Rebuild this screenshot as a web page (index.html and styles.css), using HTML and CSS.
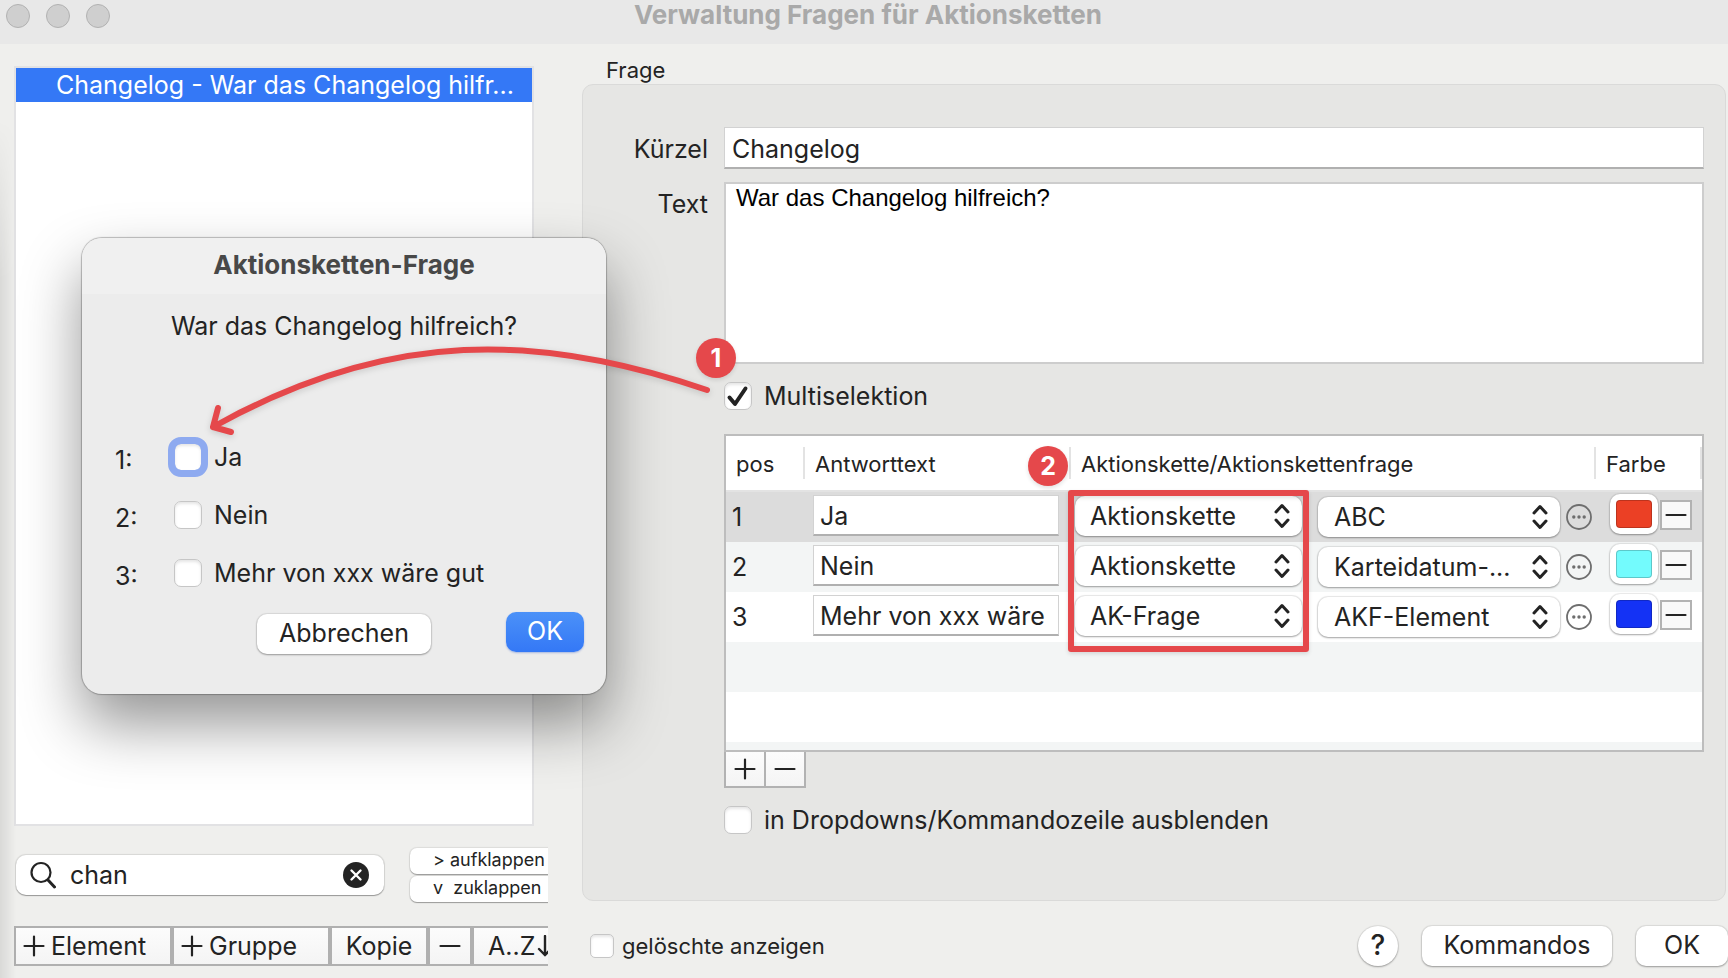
FILE: index.html
```html
<!DOCTYPE html>
<html lang="de">
<head>
<meta charset="utf-8">
<title>Verwaltung Fragen für Aktionsketten</title>
<link rel="stylesheet" href="styles.css">
</head>
<body>
<svg class="defs" width="0" height="0" aria-hidden="true">
  <symbol id="chevrons" viewBox="0 0 16 26"><path d="M2 9l6-6.500 6 6.500M2 17l6 6.500 6-6.500" fill="none" stroke="#232323" stroke-width="3" stroke-linecap="round" stroke-linejoin="round"/></symbol>
  <symbol id="minus" viewBox="0 0 22 22"><path d="M1.500 11h19" stroke="#232323" stroke-width="2.200" stroke-linecap="round"/></symbol>
  <symbol id="plus" viewBox="0 0 22 22"><path d="M1.500 11h19M11 1.500v19" stroke="#232323" stroke-width="2.200" stroke-linecap="round"/></symbol>
  <symbol id="dots" viewBox="0 0 26 26"><circle cx="13" cy="13" r="12" fill="none" stroke="#6e6e6e" stroke-width="1.800"/><circle cx="7.800" cy="13" r="1.700" fill="#6e6e6e"/><circle cx="13" cy="13" r="1.700" fill="#6e6e6e"/><circle cx="18.200" cy="13" r="1.700" fill="#6e6e6e"/></symbol>
</svg>
<div class="window">
  <header class="titlebar">
    <div class="lights"><i></i><i></i><i></i></div>
    <h1>Verwaltung Fragen für Aktionsketten</h1>
  </header>
  <div class="content">
    <aside class="sidebar">
      <ul class="list"><li>Changelog - War das Changelog hilfr...</li></ul>
      <div class="filter">
        <div class="search">
          <svg width="26" height="28" viewBox="0 0 26 28" fill="none" stroke="#232323" stroke-width="2.200" stroke-linecap="round"><circle cx="11" cy="11.500" r="9.500"/><path d="M18 19l6.500 7" stroke-width="3"/></svg>
          <input type="text" value="chan" aria-label="Suche">
          <button class="clear" aria-label="Suche löschen"><svg width="26" height="26" viewBox="0 0 26 26"><circle cx="13" cy="13" r="13" fill="#232323"/><path d="M8.500 8.500l9 9M17.500 8.500l-9 9" stroke="#fff" stroke-width="2.400" stroke-linecap="round"/></svg></button>
        </div>
        <div class="fold">
          <button>&gt; aufklappen</button>
          <button>v&nbsp; zuklappen</button>
        </div>
      </div>
      <div class="tools">
        <button class="t-element"><svg width="22" height="22"><use href="#plus"/></svg>Element</button>
        <button class="t-gruppe"><svg width="22" height="22"><use href="#plus"/></svg>Gruppe</button>
        <button class="t-kopie">Kopie</button>
        <button class="t-minus" aria-label="Entfernen"><svg width="22" height="22"><use href="#minus"/></svg></button>
        <button class="t-sort">A..Z<svg width="16" height="22" viewBox="0 0 16 22" fill="none" stroke="#232323" stroke-width="2.400" stroke-linecap="round"><path d="M8 1v19M2 14l6 6 6-6"/></svg></button>
      </div>
    </aside>
    <main class="detail">
      <h2>Frage</h2>
      <section class="group">
        <label class="caption" for="kuerzel">Kürzel</label>
        <input class="field" id="kuerzel" type="text" value="Changelog">
        <label class="caption" for="text">Text</label>
        <textarea id="text">War das Changelog hilfreich?</textarea>
        <label class="check multi"><input type="checkbox" checked><span>Multiselektion</span></label>
        <div class="answers">
          <table>
            <thead><tr><th class="c-pos"><span>pos</span></th><th class="c-text"><span>Antworttext</span></th><th><span>Aktionskette/Aktionskettenfrage</span></th><th class="c-color"><span>Farbe</span></th></tr></thead>
            <tbody>
              <tr class="selected">
                <td>1</td>
                <td><input class="field" type="text" value="Ja" aria-label="Antworttext 1"></td>
                <td><div class="chain"><span class="select kind"><select aria-label="Art 1"><option>Aktionskette</option></select><svg width="16" height="26"><use href="#chevrons"/></svg></span><span class="select target"><select aria-label="Ziel 1"><option>ABC</option></select><svg width="16" height="26"><use href="#chevrons"/></svg></span><button class="more" aria-label="Mehr"><svg width="26" height="26"><use href="#dots"/></svg></button></div></td>
                <td><div class="color"><button class="swatch" aria-label="Rot"><i class="red"></i></button><button class="square" aria-label="Entfernen"><svg width="22" height="22"><use href="#minus"/></svg></button></div></td>
              </tr>
              <tr>
                <td>2</td>
                <td><input class="field" type="text" value="Nein" aria-label="Antworttext 2"></td>
                <td><div class="chain"><span class="select kind"><select aria-label="Art 2"><option>Aktionskette</option></select><svg width="16" height="26"><use href="#chevrons"/></svg></span><span class="select target"><select aria-label="Ziel 2"><option>Karteidatum-...</option></select><svg width="16" height="26"><use href="#chevrons"/></svg></span><button class="more" aria-label="Mehr"><svg width="26" height="26"><use href="#dots"/></svg></button></div></td>
                <td><div class="color"><button class="swatch" aria-label="Cyan"><i class="cyan"></i></button><button class="square" aria-label="Entfernen"><svg width="22" height="22"><use href="#minus"/></svg></button></div></td>
              </tr>
              <tr>
                <td>3</td>
                <td><input class="field" type="text" value="Mehr von xxx wäre" aria-label="Antworttext 3"></td>
                <td><div class="chain"><span class="select kind"><select aria-label="Art 3"><option>AK-Frage</option></select><svg width="16" height="26"><use href="#chevrons"/></svg></span><span class="select target"><select aria-label="Ziel 3"><option>AKF-Element</option></select><svg width="16" height="26"><use href="#chevrons"/></svg></span><button class="more" aria-label="Mehr"><svg width="26" height="26"><use href="#dots"/></svg></button></div></td>
                <td><div class="color"><button class="swatch" aria-label="Blau"><i class="blue"></i></button><button class="square" aria-label="Entfernen"><svg width="22" height="22"><use href="#minus"/></svg></button></div></td>
              </tr>
            </tbody>
          </table>
        </div>
        <div class="rowtools">
          <button aria-label="Hinzufügen"><svg width="22" height="22"><use href="#plus"/></svg></button>
          <button aria-label="Entfernen"><svg width="22" height="22"><use href="#minus"/></svg></button>
        </div>
        <label class="check hide"><input type="checkbox"><span>in Dropdowns/Kommandozeile ausblenden</span></label>
      </section>
      <footer>
        <label class="check small"><input type="checkbox"><span>gelöschte anzeigen</span></label>
        <button class="push help">?</button>
        <button class="push commands">Kommandos</button>
        <button class="push ok">OK</button>
      </footer>
    </main>
  </div>
</div>

<div class="dialog" role="dialog" aria-labelledby="dlg-title">
  <h2 id="dlg-title">Aktionsketten-Frage</h2>
  <p>War das Changelog hilfreich?</p>
  <div class="options">
    <div class="option"><b>1:</b><label class="check focused"><input type="checkbox"><span>Ja</span></label></div>
    <div class="option"><b>2:</b><label class="check"><input type="checkbox"><span>Nein</span></label></div>
    <div class="option"><b>3:</b><label class="check"><input type="checkbox"><span>Mehr von xxx wäre gut</span></label></div>
  </div>
  <div class="actions">
    <button class="push cancel">Abbrechen</button>
    <button class="push primary">OK</button>
  </div>
</div>

<svg class="arrow" width="520" height="110" viewBox="200 340 520 110" fill="none" stroke="#e5484b" stroke-width="6" stroke-linecap="round" stroke-linejoin="round" aria-hidden="true">
  <path d="M707 390C540 333 390 328 213 427M218 408l-5 19 18 5"/>
</svg>
<div class="frame"></div>
<div class="badge one">1</div>
<div class="badge two">2</div>
</body>
</html>
```
FILE: styles.css
```css
* { box-sizing: border-box; }
body {
  margin: 0;
  overflow: hidden;
  background: #efefed;
  color: #232323;
  font-family: Inter, "Liberation Sans", sans-serif;
  font-size: 25px;
  line-height: 30px;
}
h1, h2, p, ul { margin: 0; padding: 0; }
button, input, select, textarea { font: inherit; color: inherit; margin: 0; border-radius: 0; outline: none; }
button { padding: 0; border: 0; background: none; white-space: nowrap; }
svg { display: block; flex: none; }
.defs { position: absolute; }

.window { display: flex; flex-direction: column; min-height: 100vh; position: relative; }
.window::before {
  content: "";
  position: absolute;
  inset: 120px auto 0 0;
  width: 16px;
  background: linear-gradient(90deg, rgba(0,0,0,.09), transparent);
  mask-image: linear-gradient(transparent, #000 160px);
}
.titlebar { height: 44px; background: #e8e8e8; display: grid; grid-template-columns: 120px 1fr 118px; padding-left: 6px; }
.lights { display: flex; gap: 16px; padding-top: 4px; }
.lights i { width: 24px; height: 24px; border-radius: 50%; background: #cfcfcf; border: 1px solid #b2b2b2; }
.titlebar h1 { font-size: 26px; line-height: 30px; font-weight: 700; color: #a9a9a9; text-align: center; }
.content { flex: 1; display: grid; grid-template-columns: 548px 1fr; column-gap: 34px; }

.sidebar { display: flex; flex-direction: column; padding: 22px 0 12px 14px; overflow: hidden; }
.list { flex: 1; list-style: none; background: #fff; border: 2px solid #e2e2e4; margin-right: 14px; }
.list li { height: 34px; line-height: 34px; padding-left: 40px; background: #3478f6; color: #fff; white-space: nowrap; overflow: hidden; }
.filter { display: flex; align-items: center; gap: 26px; padding-left: 2px; margin: 22px 0 24px; }
.search { width: 368px; height: 40px; display: flex; align-items: center; padding: 0 15px 0 14px; background: #fff; border-radius: 10px; box-shadow: 0 0 1px 1px rgba(0,0,0,.1), 0 1px 1px rgba(0,0,0,.3); }
.search input { flex: 1; min-width: 0; border: 0; padding: 0 0 0 14px; background: none; }
.fold { flex: 1; display: grid; gap: 2px; margin-right: -20px; }
.fold button { height: 26px; padding: 0 0 2px 23px; text-align: left; font-size: 18px; line-height: 24px; background: #fff; border-radius: 7px; box-shadow: 0 0 1px 1px rgba(0,0,0,.08), 0 1px 1px rgba(0,0,0,.3); }
.tools { display: flex; height: 40px; margin-right: -20px; }
.tools button { display: flex; align-items: center; border: 2px solid #b0b0b0; background: linear-gradient(#fcfcfc, #f4f4f4); }
.t-element, .t-gruppe { width: 158px; padding-left: 7px; gap: 6px; }
.t-kopie { width: 98px; justify-content: center; }
.t-minus { width: 44px; justify-content: center; }
.t-sort { width: 96px; padding-left: 14px; gap: 2px; }

.detail { display: flex; flex-direction: column; padding: 10px 2px 12px 0; }
.detail > h2 { font-size: 22px; line-height: 32px; height: 30px; font-weight: 400; padding-left: 24px; }
.group {
  flex: 1;
  display: grid;
  grid-template-columns: 125px 1fr;
  grid-template-rows: 55px 200px 52px 318px 54px 28px;
  column-gap: 16px;
  align-content: start;
  padding: 42px 21px 0 0;
  background: #e6e6e4;
  border: 1px solid #dadad9;
  border-radius: 11px;
}
.caption { text-align: right; line-height: 45px; }
.field { width: 100%; height: 42px; background: #fff; border: 1px solid #d2d2d2; border-bottom: 2px solid #b0b0b0; padding: 2px 7px 0; }
textarea { width: 100%; height: 182px; display: block; resize: none; border: 2px solid #cdcdcd; background: #fff; padding: 0 10px; font-family: "Liberation Sans", Arial, sans-serif; font-size: 24px; line-height: 28px; color: #000; }
.check { display: flex; align-items: center; height: 28px; gap: 12px; white-space: nowrap; }
.check input { appearance: none; flex: none; width: 28px; height: 28px; border: 1px solid #c6c6c6; border-radius: 7px; background: #fff; box-shadow: inset 0 2px 3px rgba(0,0,0,.1); }
.check input:checked { background: url("data:image/svg+xml,%3Csvg xmlns='http://www.w3.org/2000/svg' viewBox='0 0 28 28'%3E%3Cpath d='M5.500 15.500l5.500 6.500L21.500 6.500' fill='none' stroke='%23232323' stroke-width='4' stroke-linecap='round' stroke-linejoin='round'/%3E%3C/svg%3E") center / 28px 28px no-repeat #fff; }
.multi, .answers, .rowtools, .hide { grid-column: 2; }

.answers { border: 2px solid #bdbdbd; overflow: hidden; background: linear-gradient(#fff 206px, #f3f5f5 206px 256px, #fff 256px 306px, #f3f5f5 306px); }
table { width: 100%; table-layout: fixed; border-collapse: separate; border-spacing: 0; }
th { height: 56px; padding: 0; border-bottom: 2px solid #e3e3e3; font-size: 22px; font-weight: 400; text-align: left; background: #fff; }
th span { display: block; height: 32px; line-height: 34px; padding-left: 10px; border-right: 2px solid #e3e3e3; white-space: nowrap; }
.c-pos { width: 79px; }
.c-text { width: 266px; }
.c-color { width: 106px; }
td { height: 50px; padding: 0; vertical-align: top; }
td:first-child { padding-left: 6px; line-height: 50px; }
tr.selected td { background: #dcdcdc; }
tbody tr:nth-child(2) td { background: #f3f5f5; }
td .field { display: block; width: 246px; height: 41px; margin: 3px 0 0 8px; padding: 2px 6px 0; }
.chain { display: flex; align-items: center; height: 50px; padding: 0 4px; }
.select { position: relative; display: block; }
.select select { appearance: none; display: block; width: 100%; height: 40px; padding: 0 40px 0 16px; border: 0; border-radius: 10px; background: #fff; box-shadow: 0 0 1px 1px rgba(0,0,0,.09), 0 1px 2px rgba(0,0,0,.3); }
.select svg { position: absolute; right: 12px; top: 7px; pointer-events: none; }
.kind { flex: 227; align-self: start; padding-top: 4px; margin-right: 16px; }
.kind select { padding-left: 15px; }
.kind svg { top: 11px; }
.target { flex: 242; margin-right: 6px; }
.color { display: flex; align-items: flex-start; gap: 2px; padding-left: 14px; }
.swatch { width: 48px; height: 40px; margin-top: 2px; padding: 6px; background: #fff; border-radius: 10px; box-shadow: 0 0 1px 1px rgba(0,0,0,.08), 0 1px 2px rgba(0,0,0,.3); }
.swatch i { display: block; height: 28px; border-radius: 4px; border: 1px solid rgba(0,0,0,.2); }
.red { background: #eb4025; }
.cyan { background: #73fbfd; }
.blue { background: #1432f5; }
.square { width: 32px; height: 30px; margin-top: 8px; display: grid; place-items: center; border: 2px solid #b2b2b2; background: #f8f8f8; }
.rowtools { display: flex; height: 36px; }
.rowtools button { width: 42px; display: grid; place-items: center; border: 2px solid #b2b2b2; border-top: 0; background: linear-gradient(#fcfcfc, #f4f4f4); }
.rowtools button + button { border-left: 0; width: 40px; }

footer { display: flex; align-items: center; height: 40px; margin-top: 25px; padding-left: 8px; }
.small { gap: 8px; margin-right: auto; font-size: 22px; }
.small input { width: 24px; height: 24px; border-radius: 5px; }
.push { height: 40px; padding-bottom: 2px; background: #fff; border-radius: 10px; box-shadow: 0 0 1px 1px rgba(0,0,0,.08), 0 1px 2px rgba(0,0,0,.3); }
.help { width: 40px; border-radius: 50%; font-size: 28px; font-weight: 500; margin-right: 24px; }
.commands { width: 190px; margin-right: 24px; }
.ok { width: 92px; margin-right: -2px; }

.dialog { position: absolute; left: 82px; top: 238px; width: 524px; height: 456px; border-radius: 20px; background: #ececec; overflow: clip; box-shadow: 0 0 1px 1px rgba(0,0,0,.25), 0 30px 60px rgba(0,0,0,.42); }
.dialog h2 { height: 56px; line-height: 54px; font-size: 26px; font-weight: 700; color: #484848; text-align: center; background: #f0f0f0; }
.dialog p { padding-top: 17px; text-align: center; }
.options { display: grid; gap: 30px; padding: 102px 0 0 33px; }
.option { display: flex; align-items: center; height: 28px; }
.option b { width: 59px; font-weight: 400; padding-top: 6px; }
.focused input { border-color: #7898e0; outline: 7px solid #8eaaf0; outline-offset: -1px; }
.actions { display: flex; align-items: flex-start; justify-content: space-between; padding: 25px 22px 0 175px; }
.cancel { width: 174px; margin-top: 2px; }
.primary { width: 78px; color: #fff; background: linear-gradient(#4b91f8, #3478f6); box-shadow: 0 1px 2px rgba(0,60,200,.3); }

.arrow { position: absolute; left: 200px; top: 340px; filter: drop-shadow(0 2px 3px rgba(0,0,0,.15)); }
.frame { position: absolute; left: 1068px; top: 490px; width: 241px; height: 162px; border: 6px solid #e5484b; border-radius: 3px; box-shadow: 0 2px 4px rgba(0,0,0,.12), inset 0 2px 4px rgba(0,0,0,.12); pointer-events: none; }
.badge { position: absolute; width: 40px; height: 40px; border-radius: 50%; background: #e5484b; color: #fff; font-weight: 700; line-height: 40px; text-align: center; box-shadow: 0 2px 4px rgba(0,0,0,.12); }
.one { left: 696px; top: 338px; }
.two { left: 1028px; top: 446px; }
```
